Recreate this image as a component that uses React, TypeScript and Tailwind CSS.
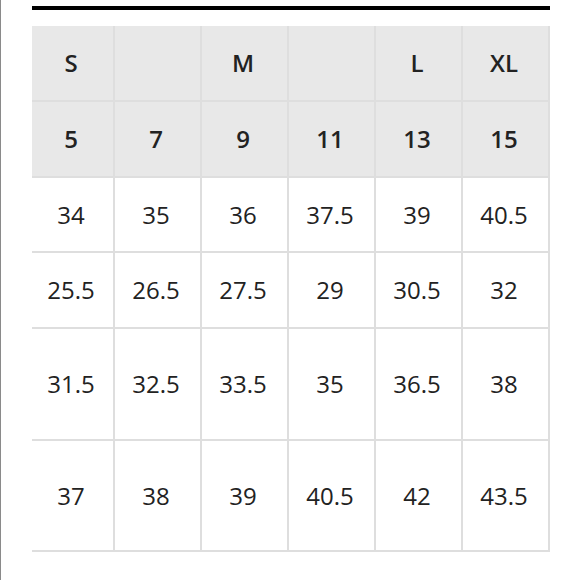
const header1 = ["S", "", "M", "", "L", "XL"];
const header2 = ["5", "7", "9", "11", "13", "15"];

const rows: { h: string; cells: string[] }[] = [
  { h: "h-[75px]", cells: ["34", "35", "36", "37.5", "39", "40.5"] },
  { h: "h-[76px]", cells: ["25.5", "26.5", "27.5", "29", "30.5", "32"] },
  { h: "h-[112px]", cells: ["31.5", "32.5", "33.5", "35", "36.5", "38"] },
  { h: "h-[111px]", cells: ["37", "38", "39", "40.5", "42", "43.5"] },
];

function Cell({ text, head, h }: { text: string; head?: boolean; h: string }) {
  return (
    <div
      className={`${h} flex items-center justify-center pr-[3px] border-r-2 border-b-2 border-[#dedede] text-[24px] text-[#222] ${
        head ? "bg-[#e8e8e8] font-semibold" : "bg-white font-normal"
      }`}
    >
      {text}
    </div>
  );
}

export default function App() {
  return (
    <div
      className="w-[580px] h-[580px] bg-white border-l border-[#8a8a8a] overflow-hidden"
      style={{ fontFamily: "'Open Sans', 'Noto Sans', sans-serif" }}
    >
      <div className="ml-[31px] mt-[6px] w-[518px] h-[4px] bg-black" />
      <div className="ml-[31px] mt-[16px] w-[518px] grid grid-cols-[83px_repeat(5,1fr)]">
        {header1.map((t, i) => (
          <Cell key={"a" + i} text={t} head h="h-[76px]" />
        ))}
        {header2.map((t, i) => (
          <Cell key={"b" + i} text={t} head h="h-[76px]" />
        ))}
        {rows.map((r, ri) =>
          r.cells.map((t, i) => <Cell key={ri + "-" + i} text={t} h={r.h} />)
        )}
      </div>
    </div>
  );
}
